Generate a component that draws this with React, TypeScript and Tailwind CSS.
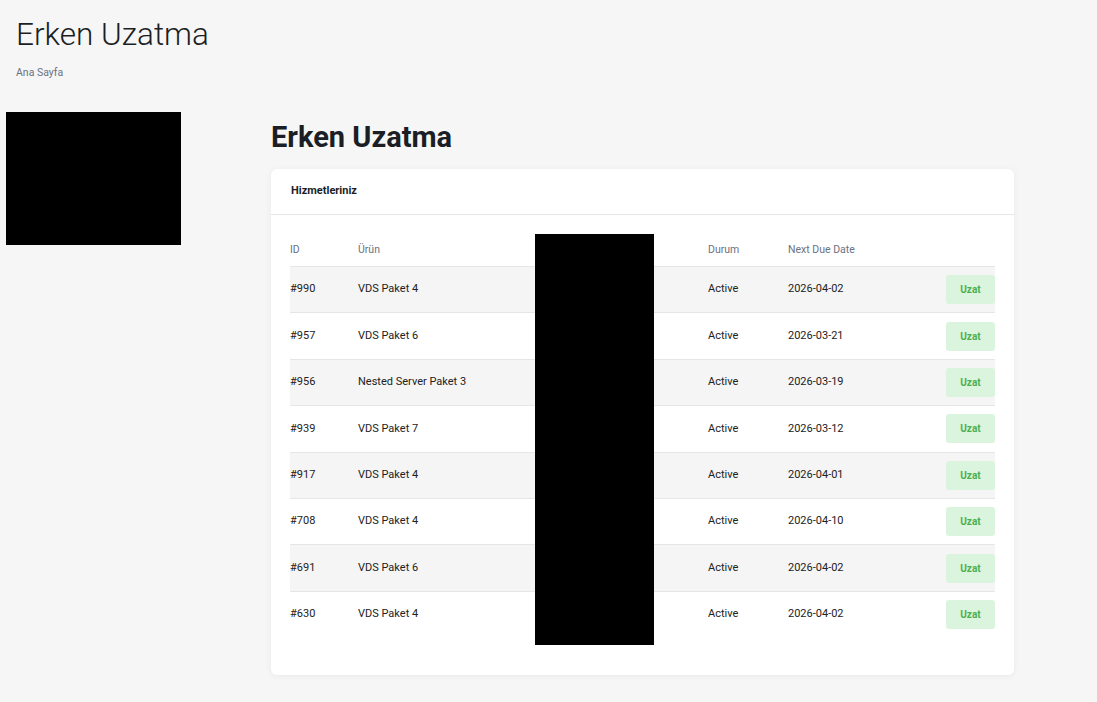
const services = [
  { id: "#990", name: "VDS Paket 4", status: "Active", due: "2026-04-02" },
  { id: "#957", name: "VDS Paket 6", status: "Active", due: "2026-03-21" },
  { id: "#956", name: "Nested Server Paket 3", status: "Active", due: "2026-03-19" },
  { id: "#939", name: "VDS Paket 7", status: "Active", due: "2026-03-12" },
  { id: "#917", name: "VDS Paket 4", status: "Active", due: "2026-04-01" },
  { id: "#708", name: "VDS Paket 4", status: "Active", due: "2026-04-10" },
  { id: "#691", name: "VDS Paket 6", status: "Active", due: "2026-04-02" },
  { id: "#630", name: "VDS Paket 4", status: "Active", due: "2026-04-02" },
];

const cols = "grid grid-cols-[68px_177px_173px_80px_1fr_auto] items-center";

export default function App() {
  return (
    <div className="min-h-[702px] bg-[#f6f6f6] font-['Roboto',sans-serif] text-[#222]">
      <div className="px-4 pt-[15px]">
        <h1 className="text-[31.5px] font-light leading-[40px] text-[#1b1e24]">Erken Uzatma</h1>
        <p className="mt-[11px] text-[10.5px] leading-[14px] text-[#6b7180]">Ana Sayfa</p>
      </div>

      <div className="mt-[32px] flex">
        <div className="ml-[6px] h-[133px] w-[175px] bg-black" />

        <main className="ml-[90px] w-[743px]">
          <h2 className="mt-[7px] text-[29px] font-bold leading-[36px] text-[#1b1e24]">Erken Uzatma</h2>

          <div className="mt-[14px] rounded-[6px] bg-white shadow-[0_1px_6px_rgba(0,0,0,0.06)]">
            <div className="flex h-[46px] items-center border-b border-[#e6e6e6] px-[20px]">
              <span className="text-[11px] font-bold text-[#1b1e24]">Hizmetleriniz</span>
            </div>

            <div className="relative px-[19px] pb-[38px] pt-[18px]">
              <div className={`${cols} h-[33px] text-[10.5px] text-[#6b7180]`}>
                <span>ID</span>
                <span>Ürün</span>
                <span />
                <span>Durum</span>
                <span>Next Due Date</span>
                <span />
              </div>

              {services.map((s, i) => (
                <div
                  key={s.id}
                  className={`${cols} h-[46.4px] border-t border-[#e6e6e6] text-[11px] ${i % 2 === 0 ? "bg-[#f5f5f5]" : "bg-white"}`}
                >
                  <span>{s.id}</span>
                  <span>{s.name}</span>
                  <span />
                  <span>{s.status}</span>
                  <span>{s.due}</span>
                  <button className="h-[29px] w-[49px] rounded-[3px] bg-[#dbf4dd] text-[10px] font-bold text-[#4caf50]">
                    Uzat
                  </button>
                </div>
              ))}

              <div className="absolute left-[264px] top-[19px] h-[411px] w-[119px] bg-black" />
            </div>
          </div>
        </main>
      </div>
    </div>
  );
}
